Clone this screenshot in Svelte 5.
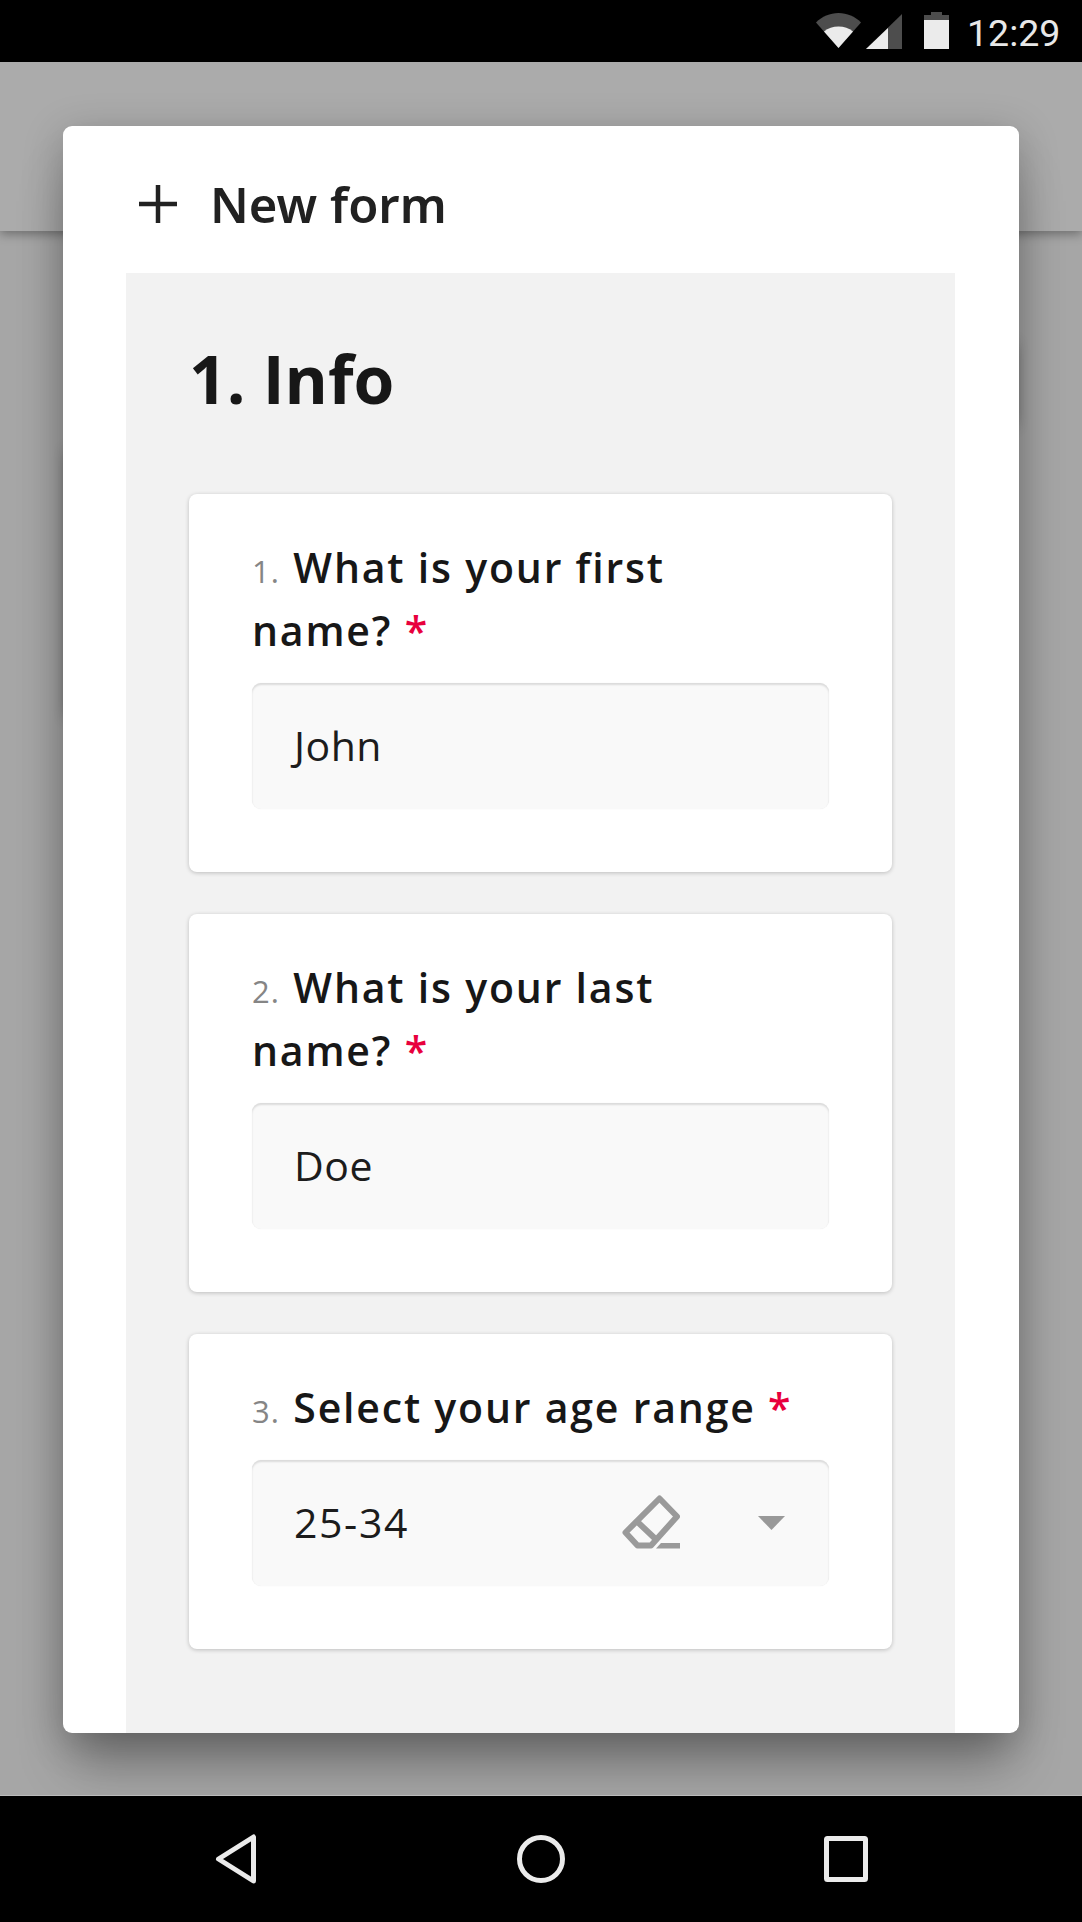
<script>
  const questions = [
    { n: 1, label: 'What is your first name?', value: 'John' },
    { n: 2, label: 'What is your last name?', value: 'Doe' },
    { n: 3, label: 'Select your age range', value: '25-34', select: true }
  ];
</script>

<div class="phone">
  <div class="status">
    <svg class="wifi" viewBox="0 0 45 35" width="45" height="35">
      <path d="M0 9.500C6 3.500 14 0 22.500 0S39 3.500 45 9.500L22.500 35z" fill="#4d4d4d" />
      <path d="M8 18.500C12 15 17 13.500 22.500 13.500S33 15 37 18.500L22.500 35z" fill="#ebebeb" />
    </svg>
    <svg class="signal" viewBox="0 0 36 35" width="36" height="35">
      <path d="M36 0V35H0z" fill="#4d4d4d" />
      <path d="M22 14V35H0z" fill="#ebebeb" />
    </svg>
    <svg class="battery" viewBox="0 0 25 37" width="25" height="37">
      <path d="M7 0H18V3H25V8H0V3H7z" fill="#4d4d4d" />
      <path d="M0 8H25V37H0z" fill="#ebebeb" />
    </svg>
    <span class="time">12:29</span>
  </div>

  <div class="backdrop">
    <div class="behind-head"></div>
    <div class="behind-card right"></div>
    <div class="behind-card left"></div>

    <div class="dialog">
      <div class="dialog-title">
        <svg viewBox="0 0 38 38" width="38" height="38">
          <path d="M19 0V38M0 19H38" stroke="#212121" stroke-width="4.500" fill="none" />
        </svg>
        <span>New form</span>
      </div>
      <div class="section">
        <h1>1. Info</h1>
        {#each questions as q}
          <div class="card">
            <div class="question">
              <span class="num">{q.n}.</span>
              {q.label}
              <span class="req">*</span>
            </div>
            <div class="field">
              <span class="value" class:wide={q.select}>{q.value}</span>
              {#if q.select}
                <svg class="eraser" viewBox="0 0 58 54" width="58" height="54">
                  <path
                    d="M37.500 3.500L55 21.500L29 50.500H15.500L3.500 37.500z M14.500 26L33 43.500"
                    fill="none"
                    stroke="#9a9a9a"
                    stroke-width="6"
                    stroke-linejoin="round"
                  />
                  <path d="M39 48H58V53.500H34z" fill="#9a9a9a" />
                </svg>
                <svg class="caret" viewBox="0 0 27 14" width="27" height="14">
                  <path d="M0 0H27L13.500 14z" fill="#999" />
                </svg>
              {/if}
            </div>
          </div>
        {/each}
      </div>
    </div>
  </div>

  <div class="nav">
    <svg viewBox="0 0 42 50" width="42" height="50">
      <path d="M38.500 3V47L3.500 25z" fill="none" stroke="#ebebeb" stroke-width="5" stroke-linejoin="round" />
    </svg>
    <svg viewBox="0 0 48 48" width="48" height="48">
      <circle cx="24" cy="24" r="21.500" fill="none" stroke="#ebebeb" stroke-width="5" />
    </svg>
    <svg viewBox="0 0 44 46" width="44" height="46">
      <rect x="2.500" y="2.500" width="39" height="41" rx="1" fill="none" stroke="#ebebeb" stroke-width="5" />
    </svg>
  </div>
</div>

<style>
  :global(body) {
    margin: 0;
    background: #000;
  }

  .phone {
    width: 1082px;
    height: 1922px;
    display: flex;
    flex-direction: column;
    font-family: "Open Sans", sans-serif;
    overflow: hidden;
  }

  .status {
    height: 62px;
    background: #000;
    display: flex;
    align-items: flex-start;
    flex-shrink: 0;
    padding-left: 816px;
    box-sizing: border-box;
  }

  .wifi {
    margin-top: 13px;
  }

  .signal {
    margin: 14px 0 0 5px;
  }

  .battery {
    margin: 12px 0 0 22px;
  }

  .time {
    margin: 11px 0 0 18px;
    font: 400 37.500px/44px Roboto, sans-serif;
    color: #e8e8e8;
  }

  .backdrop {
    flex: 1;
    position: relative;
    background: #a6a6a6;
    overflow: hidden;
  }

  .behind-head {
    height: 169px;
    background: #ababab;
    box-shadow: 0 3px 10px rgba(0, 0, 0, 0.35);
    position: relative;
    z-index: 1;
  }

  .behind-card {
    box-shadow: 0 0 14px rgba(0, 0, 0, 0.45);
  }

  .behind-card.right {
    margin: 114px 68px 0 100px;
    height: 79px;
  }

  .behind-card.left {
    margin: 28px 100px 0 68px;
    height: 264px;
  }

  .dialog {
    position: absolute;
    z-index: 2;
    left: 63px;
    top: 64px;
    width: 956px;
    height: 1607px;
    background: #fff;
    border-radius: 9px;
    box-sizing: border-box;
    padding: 0 64px 0 63px;
    overflow: hidden;
    box-shadow: 0 40px 50px -10px rgba(0, 0, 0, 0.3), 0 8px 40px rgba(0, 0, 0, 0.22);
  }

  .dialog-title {
    height: 147px;
    display: flex;
    align-items: center;
    gap: 33px;
    padding: 9px 0 0 13px;
    box-sizing: border-box;
    font: 600 49px "Noto Sans", sans-serif;
    color: #212121;
  }

  .section {
    background: #f2f2f2;
    height: 1460px;
    padding: 0 63px;
    box-sizing: border-box;
    overflow: hidden;
  }

  h1 {
    margin: 59px 0 70px;
    font-size: 66px;
    line-height: 92px;
    font-weight: 700;
    color: #171717;
  }

  .card {
    background: #fff;
    border-radius: 8px;
    box-shadow: 0 1px 4px rgba(0, 0, 0, 0.22);
    padding: 42px 63px 63px;
    margin-bottom: 42px;
  }

  .question {
    font-size: 41px;
    line-height: 63px;
    font-weight: 600;
    letter-spacing: 1.8px;
    color: #171717;
    margin-bottom: 21px;
    padding-right: 24px;
  }

  .num {
    font-size: 31px;
    line-height: 1;
    font-weight: 500;
    letter-spacing: 1px;
    color: #858585;
    margin-right: 1px;
  }

  .req {
    color: #e8003d;
  }

  .field {
    height: 126px;
    background: #f9f9f9;
    border-radius: 9px;
    box-shadow: inset 0 2px 2px rgba(0, 0, 0, 0.12), 0 0 1px rgba(0, 0, 0, 0.1);
    display: flex;
    align-items: center;
    padding: 0 41px 0 42px;
    box-sizing: border-box;
    font-size: 41px;
    letter-spacing: 0.5px;
    color: #1c1c1c;
  }

  .value {
    flex: 1;
    padding-bottom: 3px;
  }

  .value.wide {
    letter-spacing: 1.600px;
  }

  .eraser {
    margin: 0 78px 2px -1px;
  }

  .caret {
    margin-right: 3px;
  }

  .nav {
    height: 127px;
    background: #000;
    flex-shrink: 0;
    border-top: 1px solid #bbb;
    box-sizing: border-box;
    display: flex;
    align-items: center;
    justify-content: space-between;
    padding: 0 214px 0 215px;
  }
</style>
